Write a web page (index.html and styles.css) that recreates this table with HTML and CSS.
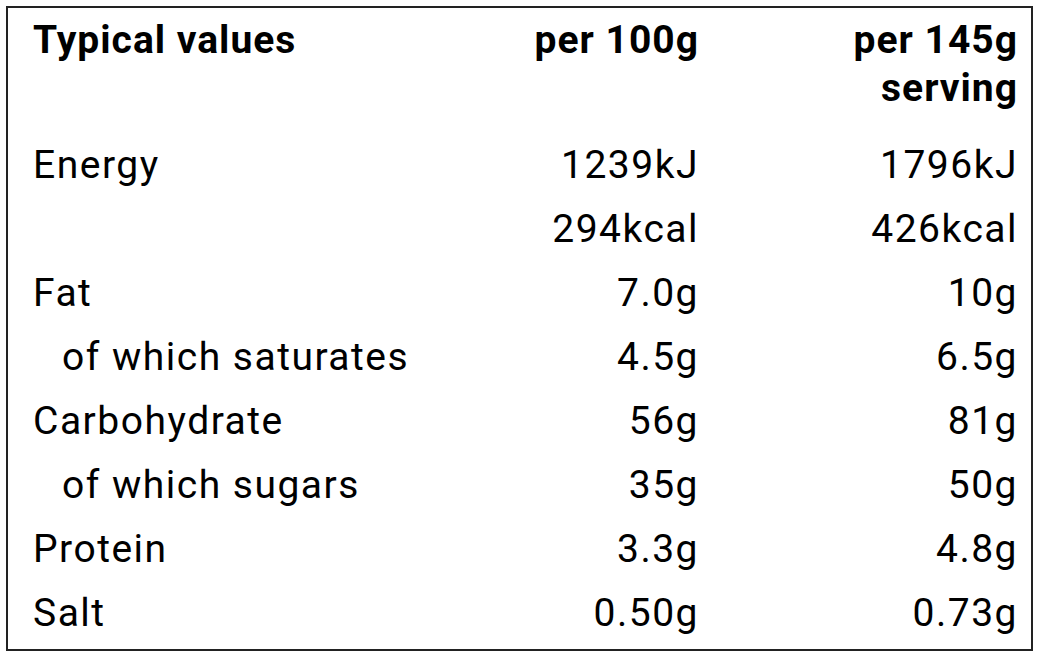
FILE: index.html
```html
<!DOCTYPE html>
<html lang="en">
<head>
<meta charset="utf-8">
<title>Nutrition</title>
<link rel="stylesheet" href="styles.css">
</head>
<body>
<div class="panel">
  <div class="row head">
    <div class="cell label">Typical values</div>
    <div class="cell num">per 100g</div>
    <div class="cell num"><span class="wrap">per 145g serving</span></div>
  </div>
  <div class="row"><div class="cell label">Energy</div><div class="cell num">1239kJ</div><div class="cell num">1796kJ</div></div>
  <div class="row"><div class="cell label"></div><div class="cell num">294kcal</div><div class="cell num">426kcal</div></div>
  <div class="row"><div class="cell label">Fat</div><div class="cell num">7.0g</div><div class="cell num">10g</div></div>
  <div class="row"><div class="cell label sub">of which saturates</div><div class="cell num">4.5g</div><div class="cell num">6.5g</div></div>
  <div class="row"><div class="cell label">Carbohydrate</div><div class="cell num">56g</div><div class="cell num">81g</div></div>
  <div class="row"><div class="cell label sub">of which sugars</div><div class="cell num">35g</div><div class="cell num">50g</div></div>
  <div class="row"><div class="cell label">Protein</div><div class="cell num">3.3g</div><div class="cell num">4.8g</div></div>
  <div class="row"><div class="cell label">Salt</div><div class="cell num">0.50g</div><div class="cell num">0.73g</div></div>
</div>
</body>
</html>
```
FILE: styles.css
```css
html, body {
  margin: 0;
  padding: 0;
  background: #ffffff;
}
body {
  padding: 6px;
  font-family: Roboto, "Noto Sans", Arial, sans-serif;
  color: #000000;
}
.panel {
  box-sizing: border-box;
  width: 1027px;
  height: 645px;
  border: 2px solid #222222;
  padding: 0 13px 4px 25px;
  font-size: 39px;
  letter-spacing: 1.5px;
  line-height: 48px;
}
.row {
  display: grid;
  grid-template-columns: 1fr 240px 319px;
  padding: 8px 0;
}
.row.head {
  padding: 8px 0 21px;
  font-weight: 700;
  letter-spacing: 1px;
}
.cell.num {
  text-align: right;
}
.wrap {
  display: inline-block;
  max-width: 200px;
}
.sub {
  padding-left: 29px;
}
```
